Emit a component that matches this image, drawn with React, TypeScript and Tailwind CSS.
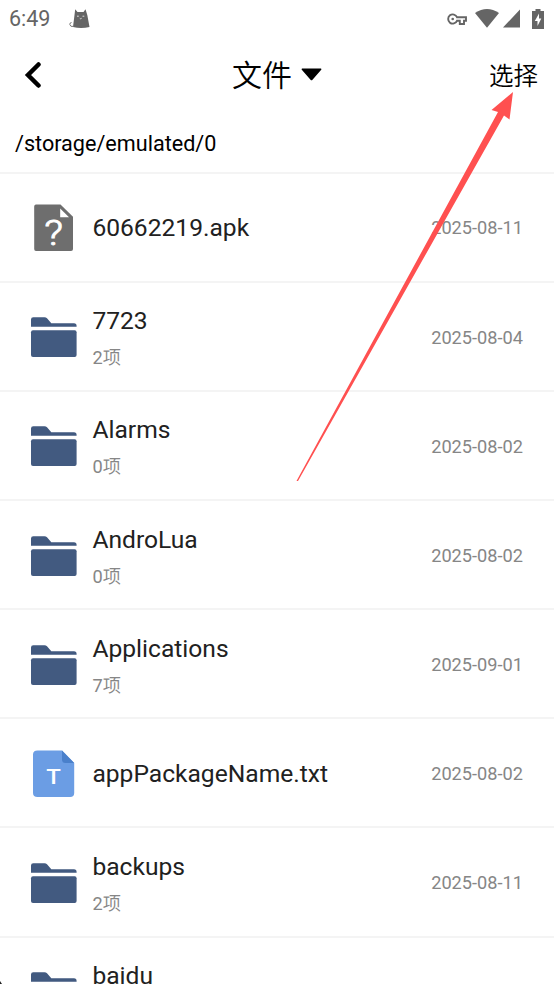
import React from "react";

type EntryKind = "folder" | "unknown" | "text";

interface Entry {
  name: string;
  kind: EntryKind;
  count?: number;
  date?: string;
}

const entries: Entry[] = [
  { name: "60662219.apk", kind: "unknown", date: "2025-08-11" },
  { name: "7723", kind: "folder", count: 2, date: "2025-08-04" },
  { name: "Alarms", kind: "folder", count: 0, date: "2025-08-02" },
  { name: "AndroLua", kind: "folder", count: 0, date: "2025-08-02" },
  { name: "Applications", kind: "folder", count: 7, date: "2025-09-01" },
  { name: "appPackageName.txt", kind: "text", date: "2025-08-02" },
  { name: "backups", kind: "folder", count: 2, date: "2025-08-11" },
  { name: "baidu", kind: "folder" },
];

const FolderIcon: React.FC = () => (
  <svg width="48" height="48" viewBox="0 0 48 48" fill="#425a80">
    <path d="M1 13.800V6.500Q1 4.200 3.300 4.200H14.500Q16 4.200 17 5.300L21.300 10.300H44Q46.600 10.300 46.600 13V13.800Z" />
    <rect x="1" y="17.200" width="45.600" height="26.800" rx="2" />
  </svg>
);

const UnknownIcon: React.FC = () => (
  <svg width="48" height="48" viewBox="0 0 48 48" className="overflow-visible">
    <path
      d="M6 .6H30.500L43 12.800V45Q43 47 41 47H6Q4.200 47 4.200 45V2.400Q4.200 .6 6 .6Z"
      fill="#6e6e6e"
    />
    <path d="M30.200 4.500V13.200H39Z" fill="#fff" />
    <text
      transform="translate(23.700 40.500) scale(1.180 1)"
      textAnchor="middle"
      fontSize="35"
      fontWeight="300"
      fontFamily="Roboto, sans-serif"
      fill="#fff"
      stroke="#fff"
      strokeWidth=".8"
    >
      ?
    </text>
  </svg>
);

const TextIcon: React.FC = () => (
  <svg width="48" height="48" viewBox="0 0 48 48">
    <path
      d="M7.500 .6H32L44.200 13V43Q44.200 47 40.200 47H7.500Q3 47 3 43V4.600Q3 .6 7.500 .6Z"
      fill="#6b9de4"
    />
    <path d="M32 .6L44.200 13H35.500Q32 13 32 9.500Z" fill="#4a80cb" />
    <text
      transform="translate(23.500 34) scale(1.200 1)"
      textAnchor="middle"
      fontSize="20"
      fontWeight="500"
      fontFamily="Roboto, sans-serif"
      fill="#fff"
    >
      T
    </text>
  </svg>
);

const icons: Record<EntryKind, React.FC> = {
  folder: FolderIcon,
  unknown: UnknownIcon,
  text: TextIcon,
};

const StatusBar: React.FC = () => (
  <div className="flex h-[37px] shrink-0 items-center justify-between pl-[9px] pr-[10px] text-[#656565]">
    <div className="flex items-center gap-[19px]">
      <span className="pt-px text-[21.500px] leading-[38px]">6:49</span>
      <svg width="21" height="20" viewBox="0 0 21 20" fill="#656565">
        <path d="M6.200 .3L8.500 3H14.500L16.500 .3L18.300 6L20.500 18Q12 20.200 4 18L5.500 6Z" />
        <path d="M5 17.500Q1 18 .8 15.500Q.8 13.500 2.500 13.500" fill="none" stroke="#777" />
        <path d="M8 7.200H9.800M13.500 7.200H15.300M10.800 9.300L11.700 9.800L12.600 9.300" fill="none" stroke="#ddd" />
      </svg>
    </div>
    <div className="flex items-center">
      <svg width="20" height="14" viewBox="0 0 20 14" fill="none" stroke="#656565" strokeWidth="1.900">
        <path d="M10 5.200H19V8.800H17V12H12.800V8.800H10A4.600 4.600 0 1 1 10 5.200Z" />
        <circle cx="5.700" cy="7" r="1.300" fill="#656565" stroke="none" />
      </svg>
      <svg className="ml-2" width="24" height="19" viewBox="0 0 24 19" fill="#656565">
        <path d="M0 4Q12 -4 24 4L12 18.800Z" />
      </svg>
      <svg className="ml-1" width="17" height="19" viewBox="0 0 17 19" fill="#656565">
        <path d="M17 .5V18.500H0Z" />
      </svg>
      <svg className="ml-3" width="12" height="20" viewBox="0 0 12 20">
        <path d="M3.500 0H8.500V2H12V20H0V2H3.500Z" fill="#656565" />
        <path d="M7 4.500L2.800 12H5.500V17L9.300 9.500H7Z" fill="#fff" />
      </svg>
    </div>
  </div>
);

const Header: React.FC = () => (
  <header className="grid h-[76px] shrink-0 grid-cols-3 items-center px-[15px] text-black">
    <svg className="ml-[9px]" width="17" height="28" viewBox="0 0 17 28" fill="none" stroke="#000" strokeWidth="4.500">
      <path d="M14.500 3.500L4 14L14.500 24.500" strokeLinecap="round" />
    </svg>
    <div className="flex items-center justify-center gap-[9px]">
      <h1 className="whitespace-nowrap pt-[2px] text-[30px] font-[350] leading-[40px]">文件</h1>
      <svg className="mb-px" width="21" height="13" viewBox="0 0 21 13">
        <path d="M1 .5H20Q21 1 20 2L11.500 11.800Q10.500 12.800 9.500 11.800L1 2Q0 1 1 .5Z" />
      </svg>
    </div>
    <button className="pr-px pt-[3px] text-right text-[24.500px] font-[350] leading-[40px]">选择</button>
  </header>
);

const FileRow: React.FC<{ entry: Entry }> = ({ entry }) => {
  const Icon = icons[entry.kind];
  const isFolder = entry.kind === "folder";
  return (
    <li className="flex h-[109.170px] shrink-0 items-center border-b-2 border-[#f4f4f4] pl-[30px] pr-[31px] pt-[2px]">
      <Icon />
      <div className="ml-[14.400px] flex flex-1 flex-col">
        <span className={isFolder ? "pt-[2px] text-[24.600px] leading-[34px] text-[#212121]" : "text-[24.600px] leading-[34px] text-[#212121]"}>
          {entry.name}
        </span>
        {isFolder && (
          <span className="mt-[6px] h-[28px] text-[18.200px] leading-[28px] text-[#868686]">
            {entry.count}
            {entry.count !== undefined && <span className="font-[350]">项</span>}
          </span>
        )}
      </div>
      <span className="text-[18.200px] text-[#868686]">{entry.date}</span>
    </li>
  );
};

const App: React.FC = () => {
  return (
    <div className="relative flex h-[984px] w-[554px] flex-col overflow-hidden bg-white font-[Roboto,'Noto_Sans_CJK_SC',sans-serif]">
      <StatusBar />
      <Header />
      <div className="h-[60.500px] shrink-0 border-b-2 border-[#f4f4f4] pl-[15px] text-[21.600px] leading-[62px] text-black">
        /storage/emulated/0
      </div>
      <ul className="flex flex-col">
        {entries.map((entry) => (
          <FileRow key={entry.name} entry={entry} />
        ))}
      </ul>
      {/* arrow pointing at the select button */}
      <svg className="pointer-events-none absolute left-0 top-0" width="554" height="984" fill="#ff5050">
        <path d="M513 92L491.500 110L498 112L296.500 481L298 481L504 115.500L509.500 119.500Z" />
        <path d="M0 981L2 984H0Z" fill="#222" />
      </svg>
    </div>
  );
};

export default App;
